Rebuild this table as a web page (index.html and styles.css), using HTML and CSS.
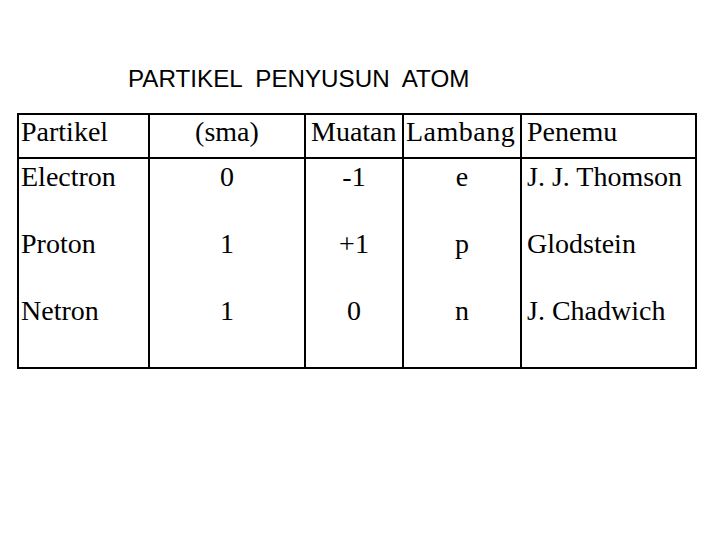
FILE: index.html
```html
<!DOCTYPE html>
<html>
<head>
<meta charset="utf-8">
<link rel="stylesheet" href="styles.css">
</head>
<body>
<div class="slide">
  <h1 class="title">PARTIKEL  PENYUSUN  ATOM</h1>
  <div class="table">
    <div class="cell head c1">Partikel</div>
    <div class="cell head c2 center">(sma)</div>
    <div class="cell head c3">Muatan</div>
    <div class="cell head c4">Lambang</div>
    <div class="cell head c5">Penemu</div>

    <div class="cell body c1">
      <div class="line">Electron</div>
      <div class="line">Proton</div>
      <div class="line">Netron</div>
    </div>
    <div class="cell body c2 center">
      <div class="line">0</div>
      <div class="line">1</div>
      <div class="line">1</div>
    </div>
    <div class="cell body c3 center">
      <div class="line">-1</div>
      <div class="line">+1</div>
      <div class="line">0</div>
    </div>
    <div class="cell body c4 center">
      <div class="line">e</div>
      <div class="line">p</div>
      <div class="line">n</div>
    </div>
    <div class="cell body c5">
      <div class="line">J. J. Thomson</div>
      <div class="line">Glodstein</div>
      <div class="line">J. Chadwich</div>
    </div>
  </div>
</div>
</body>
</html>
```
FILE: styles.css
```css
html, body {
  margin: 0;
  padding: 0;
  background: #ffffff;
}

.slide {
  width: 720px;
  height: 540px;
  padding-top: 65px;
  box-sizing: border-box;
}

.title {
  margin: 0 0 21px 128px;
  font-family: "Liberation Sans", Arial, sans-serif;
  font-weight: normal;
  font-size: 24.2px;
  line-height: 27px;
  color: #000000;
  white-space: pre;
}

.table {
  margin-left: 17px;
  width: 680px;
  box-sizing: border-box;
  border: 2px solid #000000;
  display: grid;
  grid-template-columns: 129px 156px 98px 118px 175px;
  grid-template-rows: 42px 210px;
  font-family: "Liberation Serif", "DejaVu Serif", serif;
  font-size: 28px;
  color: #000000;
}

.cell {
  box-sizing: border-box;
  white-space: nowrap;
}

.c2, .c3, .c4, .c5 {
  border-left: 2px solid #000000;
}

.head {
  border-bottom: 2px solid #000000;
  line-height: 32px;
  padding-top: 1px;
  height: 44px;
}

.body {
  padding-top: 4px;
}

.line {
  height: 67px;
  line-height: 32px;
}

.c1 {
  padding-left: 2px;
}

.c3.head {
  padding-left: 5px;
}

.c4.head {
  padding-left: 2px;
  letter-spacing: 0.5px;
}

.c5 {
  padding-left: 5px;
}

.center {
  text-align: center;
}
```
